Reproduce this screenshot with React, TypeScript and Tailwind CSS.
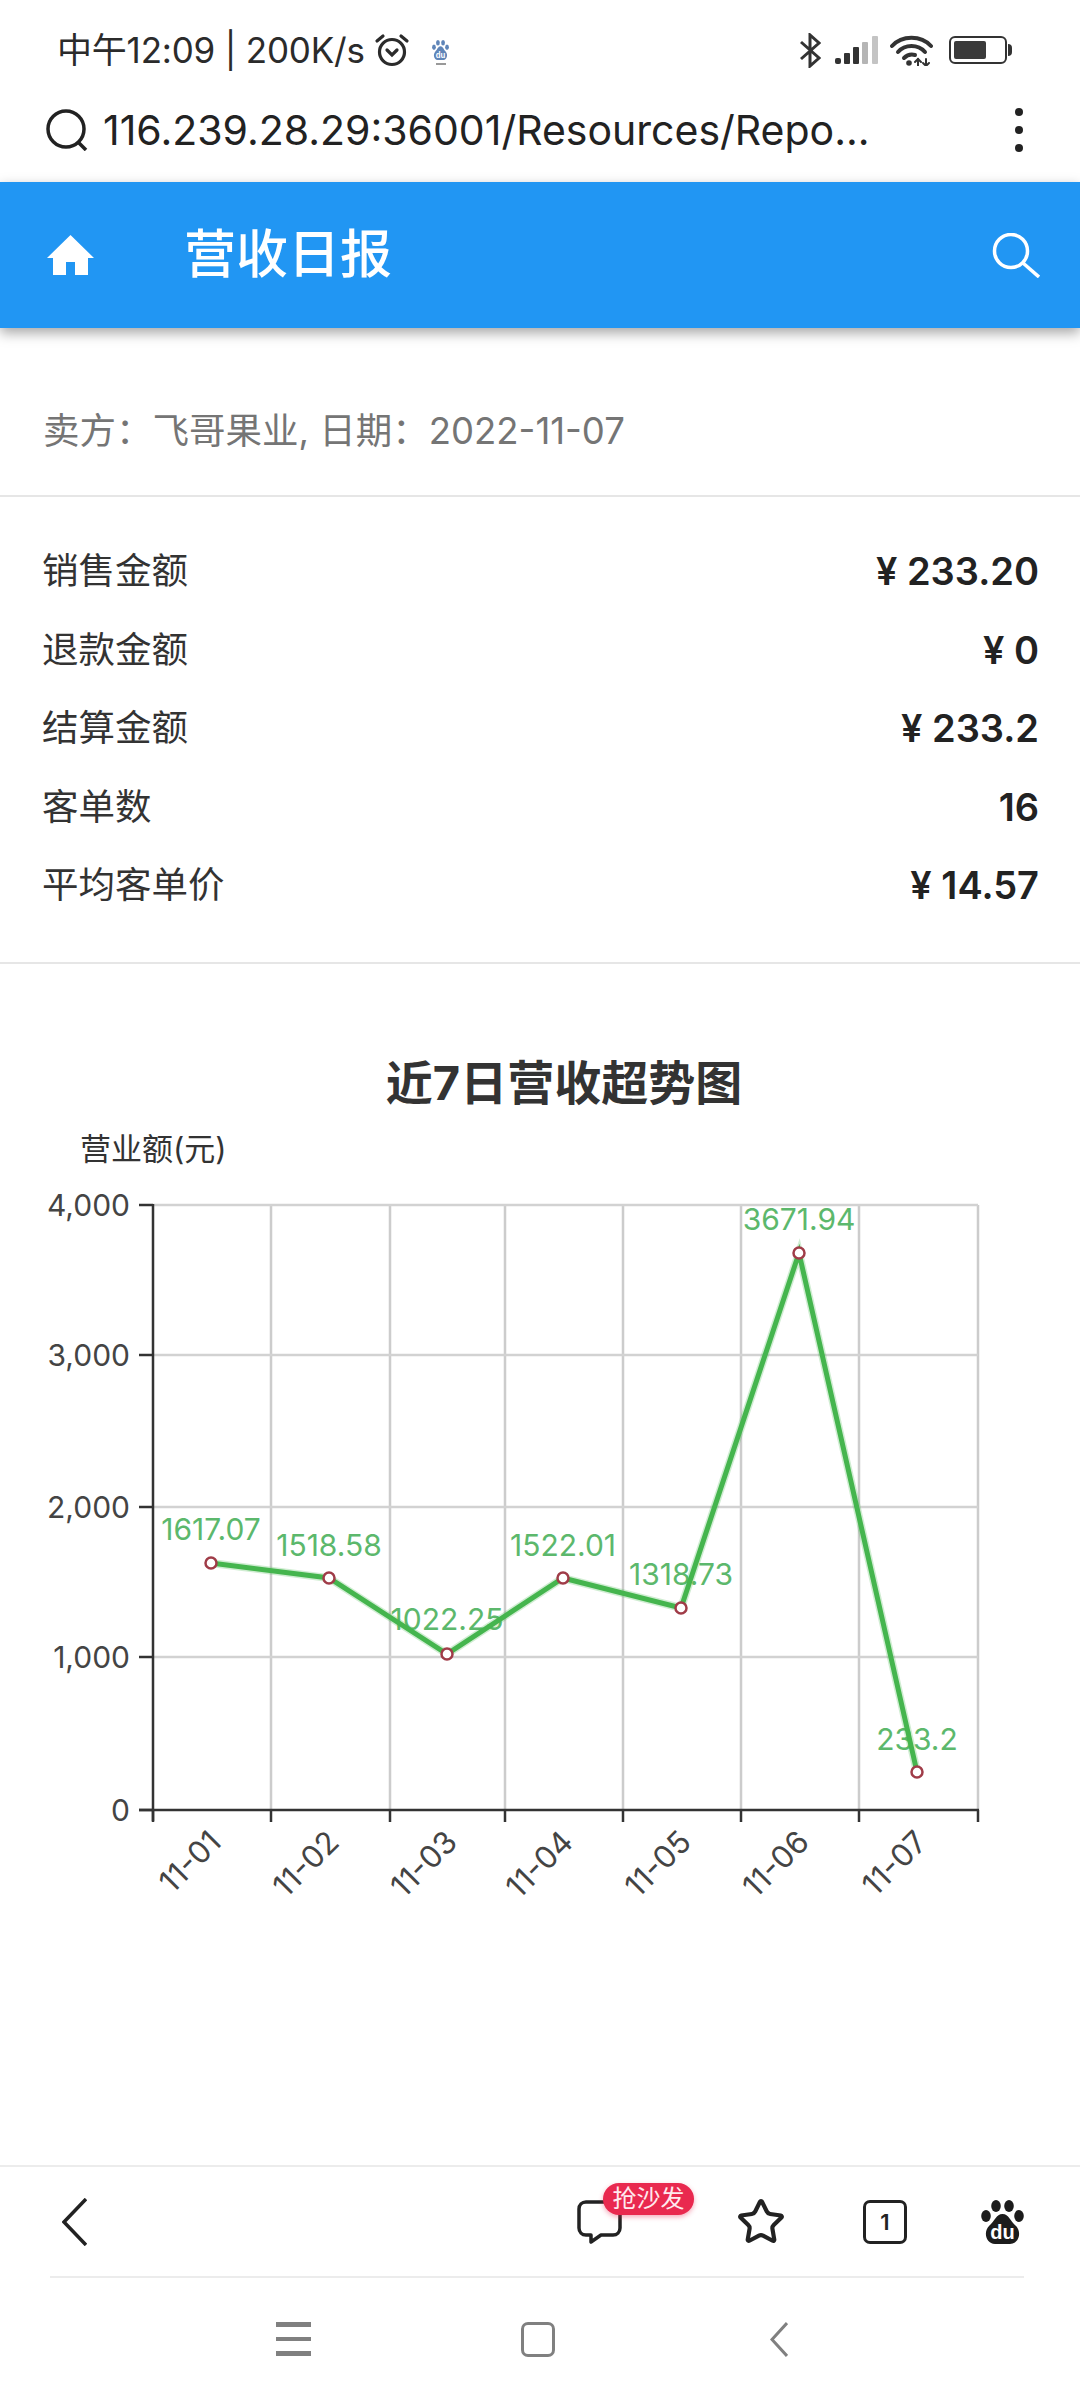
import React from 'react';
import { Star } from 'lucide-react';

const ROWS = [
  { label: '销售金额', value: '¥ 233.20' },
  { label: '退款金额', value: '¥ 0' },
  { label: '结算金额', value: '¥ 233.2' },
  { label: '客单数', value: '16' },
  { label: '平均客单价', value: '¥ 14.57' },
];

const GRID_X = [153, 271, 390, 505, 623, 741, 859, 978];
const GRID_Y = [
  { y: 1206, label: '4,000' },
  { y: 1356, label: '3,000' },
  { y: 1508, label: '2,000' },
  { y: 1658, label: '1,000' },
  { y: 1811, label: '0' },
];

const POINTS = [
  { x: 211, y: 1564, day: '11-01', value: '1617.07', labelY: 1530 },
  { x: 329, y: 1579, day: '11-02', value: '1518.58', labelY: 1546 },
  { x: 447, y: 1655, day: '11-03', value: '1022.25', labelY: 1620 },
  { x: 563, y: 1579, day: '11-04', value: '1522.01', labelY: 1546 },
  { x: 681, y: 1609, day: '11-05', value: '1318.73', labelY: 1575 },
  { x: 799, y: 1254, day: '11-06', value: '3671.94', labelY: 1220 },
  { x: 917, y: 1773, day: '11-07', value: '233.2', labelY: 1740 },
];

const Paw = ({ className, color }: { className: string; color: string }) => (
  <svg viewBox="0 0 43 44" className={className} preserveAspectRatio="none">
    <ellipse cx="15" cy="6" rx="4.8" ry="6" fill={color} />
    <ellipse cx="28" cy="6" rx="4.8" ry="6" fill={color} />
    <ellipse cx="5" cy="16" rx="4.8" ry="6" fill={color} />
    <ellipse cx="38" cy="16" rx="4.8" ry="6" fill={color} />
    <path d="M21.5 14C15 14 14 21 8 26C2 32 5 44 14 44H29C38 44 41 32 35 26C29 21 28 14 21.5 14Z" fill={color} />
    <text x="21.5" y="39" textAnchor="middle" fontSize="20" fontWeight="700" fill="#fff" fontFamily="Liberation Sans, sans-serif">du</text>
  </svg>
);

const Chart = () => (
  <svg viewBox="0 1130 1080 770" className="block w-[1080px] h-[770px]">
    <text x="80" y="1161" fontSize="31" fill="#333">营业额(元)</text>

    {GRID_X.slice(1).map((x) => (
      <line key={x} x1={x} y1="1206" x2={x} y2="1811" stroke="#cccccc" strokeWidth="2.5" />
    ))}
    {GRID_Y.slice(0, 4).map((g) => (
      <line key={g.y} x1="153" y1={g.y} x2="978" y2={g.y} stroke="#d2d2d2" strokeWidth="2.5" />
    ))}

    {/* axes */}
    <line x1="153" y1="1205" x2="153" y2="1822" stroke="#333" strokeWidth="2.5" />
    <line x1="139" y1="1811" x2="979" y2="1811" stroke="#333" strokeWidth="2.5" />
    {GRID_Y.map((g) => (
      <g key={g.label}>
        <line x1="139" y1={g.y} x2="153" y2={g.y} stroke="#333" strokeWidth="2.5" />
        <text x="130" y={g.y + 11} fontSize="30" textAnchor="end" fill="#444">{g.label}</text>
      </g>
    ))}
    {GRID_X.map((x) => (
      <line key={x} x1={x} y1="1811" x2={x} y2="1823" stroke="#333" strokeWidth="2.5" />
    ))}
    {POINTS.map((p) => (
      <text
        key={p.day}
        x={p.x + 12}
        y="1845"
        fontSize="31"
        textAnchor="end"
        fill="#444"
        transform={`rotate(-45 ${p.x + 12} 1845)`}
      >
        {p.day}
      </text>
    ))}

    {/* series */}
    {POINTS.map((p) => (
      <text key={p.value} x={p.x} y={p.labelY + 11} fontSize="30" textAnchor="middle" fill="#5cb86c">{p.value}</text>
    ))}
    <polyline points={POINTS.map((p) => `${p.x},${p.y}`).join(' ')} fill="none" stroke="#45b84d" strokeOpacity="0.25" strokeWidth="8" />
    <polyline points={POINTS.map((p) => `${p.x},${p.y}`).join(' ')} fill="none" stroke="#45b54e" strokeWidth="5" />
    {POINTS.map((p) => (
      <circle key={p.x} cx={p.x} cy={p.y} r="5.5" fill="#fff" stroke="#a03c48" strokeWidth="2.5" />
    ))}
  </svg>
);

export default function App() {
  return (
    <div className="w-[1080px] h-[2400px] flex flex-col bg-white overflow-hidden font-['Inter','Noto_Sans_CJK_SC',sans-serif]">
      {/* Status bar */}
      <div className="h-[100px] flex items-center pl-[57px] pr-[68px]">
        <span className="w-[308px] text-[35px] leading-none text-[#2b2b2b] whitespace-nowrap tracking-[-0.2px]">中午12:09 | 200K/s</span>
        <svg viewBox="0 0 36 34" className="w-[36px] h-[34px] ml-[9px]" fill="none" stroke="#2b2b2b" strokeWidth="3.2">
          <circle cx="18" cy="19" r="12.5" />
          <path d="M3 8L9 3M33 8L27 3" strokeLinecap="round" />
          <path d="M13 17L18 22L23 17" strokeLinecap="round" />
        </svg>
        <div className="ml-[22px] mt-[4px] flex flex-col items-center gap-[3px]">
          <Paw className="w-[17px] h-[20px]" color="#5f85b8" />
          <div className="w-[10px] h-[2px] bg-[#999]" />
        </div>

        <svg viewBox="0 0 22 35" className="w-[22px] h-[35px] ml-auto" fill="none" stroke="#333" strokeWidth="3">
          <path d="M2 9L20 25L11 33V2L20 10L2 26" />
        </svg>
        <svg viewBox="0 0 43 28" className="w-[43px] h-[28px] ml-[14px]">
          <rect x="0" y="22" width="6" height="6" rx="2" fill="#333" />
          <rect x="9" y="17" width="6" height="11" rx="1" fill="#333" />
          <rect x="18" y="11" width="6" height="17" rx="1" fill="#333" />
          <rect x="27" y="6" width="6" height="22" rx="1" fill="#b5b5b5" />
          <rect x="37" y="0" width="6" height="28" rx="1" fill="#c4c4c4" />
        </svg>
        <svg viewBox="0 0 43 31" className="w-[43px] h-[31px] ml-[12px]" fill="none" stroke="#333" strokeWidth="4" strokeLinecap="round">
          <path d="M2 11C12 0 31 0 41 11" />
          <path d="M8 17C15 9 28 9 35 17" />
          <path d="M14 23C17 20 21 19 25 20" />
          <circle cx="19" cy="28" r="2.8" fill="#333" stroke="none" />
          <path d="M28 24V31M36 24V31" strokeWidth="2" />
          <path d="M25 27L28 24L31 27M33 28L36 31L39 28" strokeWidth="2" />
        </svg>
        <div className="ml-[16px] flex items-center">
          <div className="w-[58px] h-[28px] rounded-[6px] border-[2.5px] border-[#333] p-[3px]">
            <div className="w-[32px] h-full rounded-[2px] bg-[#3a3a3a]" />
          </div>
          <div className="w-[4px] h-[12px] ml-[1px] rounded-r-sm bg-[#333]" />
        </div>
      </div>

      {/* Address bar */}
      <div className="h-[82px] pb-[22px] flex items-center pl-[45px] pr-[57px]">
        <svg viewBox="0 0 43 42" className="w-[43px] h-[42px]" fill="none" stroke="#222" strokeWidth="3.5">
          <circle cx="21" cy="20" r="18" />
          <path d="M33 33L41 41" />
        </svg>
        <span className="ml-[15px] text-[41px] leading-none text-[#222] whitespace-nowrap">116.239.28.29:36001/Resources/Repo...</span>
        <div className="ml-auto flex flex-col gap-[10px]">
          <div className="w-[8px] h-[8px] rounded-full bg-[#222]" />
          <div className="w-[8px] h-[8px] rounded-full bg-[#222]" />
          <div className="w-[8px] h-[8px] rounded-full bg-[#222]" />
        </div>
      </div>

      {/* Header */}
      <header className="relative h-[146px] shrink-0 flex items-center pl-[47px] pr-[40px] bg-[#2196f3] shadow-[0_5px_12px_rgba(0,0,0,0.35)]">
        <svg viewBox="0 0 47 40" className="w-[47px] h-[40px]" fill="#fff">
          <path d="M23.5 0L47 23H41V40H28V27H19V40H6V23H0Z" />
        </svg>
        <h1 className="ml-[90px] text-[52px] leading-none font-medium text-white">营收日报</h1>
        <svg viewBox="0 0 48 45" className="w-[48px] h-[45px] ml-auto" fill="none" stroke="#fff" strokeWidth="3.5">
          <circle cx="19" cy="18" r="16.5" />
          <path d="M31 30L47 44" />
        </svg>
      </header>

      {/* Seller */}
      <div className="h-[169px] shrink-0 pt-[40px] flex items-center pl-[43px] border-b-2 border-[#e6e6e6] text-[36.5px] leading-none text-[#757575]">
        卖方：飞哥果业, 日期：2022-11-07
      </div>

      {/* Summary */}
      <div className="h-[467px] shrink-0 pt-[35px] pl-[42px] pr-[41px] border-b-2 border-[#e6e6e6]">
        {ROWS.map((row) => (
          <div key={row.label} className="h-[78.5px] flex items-center justify-between">
            <span className="text-[36.5px] leading-none text-[#333]">{row.label}</span>
            <span className="text-[38px] leading-none font-semibold text-[#222]">{row.value}</span>
          </div>
        ))}
      </div>

      {/* Chart */}
      <section className="flex-1">
        <h2 className="h-[165px] pt-[92px] text-center pl-[48px] text-[47px] leading-[54px] font-bold text-[#333]">近7日营收超势图</h2>
        <Chart />
      </section>

      {/* Browser toolbar */}
      <div className="h-[111px] shrink-0 flex items-center pl-[62px] pr-[56px] border-t-2 border-[#ececec]">
        <svg viewBox="0 0 25 48" className="w-[25px] h-[48px]" fill="none" stroke="#222" strokeWidth="3.5">
          <path d="M24 1L2 24L24 47" />
        </svg>
        <div className="relative w-[45px] h-[44px] ml-auto">
          <svg viewBox="0 0 45 44" className="w-[45px] h-[44px]" fill="none" stroke="#222" strokeWidth="3.5" strokeLinejoin="round">
            <path d="M9 2H36C40 2 43 5 43 9V28C43 32 40 35 36 35H24L14 42V35H9C5 35 2 32 2 28V9C2 5 5 2 9 2Z" />
          </svg>
          <div className="absolute left-[26px] top-[-17px] w-[91px] h-[32px] rounded-full bg-[#e9294f] text-[#ffe9ee] text-[24px] leading-[32px] text-center shadow-[0_2px_5px_rgba(233,41,79,0.4)]">
            抢沙发
          </div>
        </div>
        <Star size={50} strokeWidth={2} color="#222" className="ml-[114px]" />
        <div className="w-[44px] h-[44px] ml-[77px] rounded-[7px] border-[3.5px] border-[#222] flex items-center justify-center text-[22px] leading-none font-semibold text-[#222]">1</div>
        <Paw className="w-[43px] h-[44px] ml-[74px]" color="#1c1c1c" />
      </div>
      <div className="ml-[50px] w-[974px] h-[2px] shrink-0 bg-[#ececec]" />

      {/* Android nav */}
      <div className="h-[122px] shrink-0 flex items-center justify-center pr-[16px]">
        <div className="w-[35px] flex flex-col gap-[10px]">
          <div className="h-[4.5px] bg-[#808080]" />
          <div className="h-[4.5px] bg-[#808080]" />
          <div className="h-[4.5px] bg-[#808080]" />
        </div>
        <div className="w-[34px] h-[35px] ml-[210px] rounded-[7px] border-[3.5px] border-[#808080]" />
        <svg viewBox="0 0 18 35" className="w-[18px] h-[35px] ml-[215px]" fill="none" stroke="#808080" strokeWidth="3">
          <path d="M17 1L2 17.5L17 34" />
        </svg>
      </div>
    </div>
  );
}
